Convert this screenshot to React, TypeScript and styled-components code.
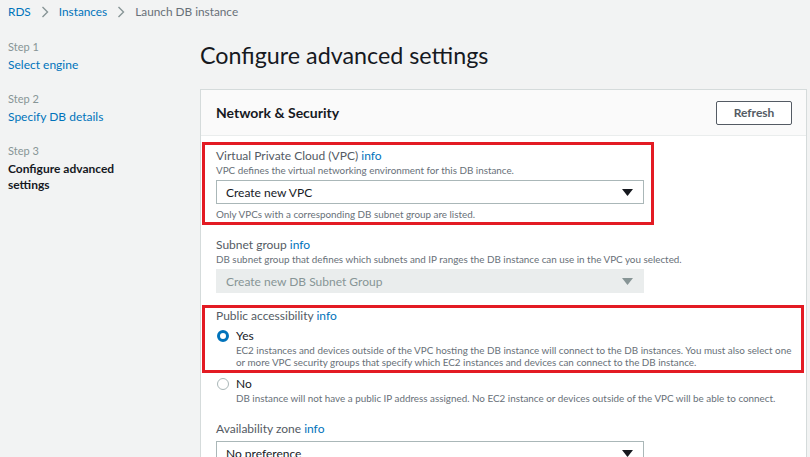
import React from "react";
import styled, { createGlobalStyle } from "styled-components";

const Global = createGlobalStyle`
  html, body { margin: 0; padding: 0; background: #f2f3f3; }
  body { font-family: Lato, "Noto Sans", sans-serif; color: #16191f; }
  * { box-sizing: border-box; }
`;

const Page = styled.div`
  width: 810px;
  height: 457px;
  overflow: hidden;
  background: #f2f3f3;
`;

const Crumbs = styled.nav`
  display: flex;
  align-items: center;
  gap: 10px;
  height: 23px;
  padding-left: 8px;
  font-size: 11.8px;
`;

const Crumb = styled.span<{ $current?: boolean }>`
  color: ${(p) => (p.$current ? "#687078" : "#0073bb")};
`;

const Sep = styled.span`
  display: flex;
`;

const Layout = styled.div`
  display: grid;
  grid-template-columns: 200px 1fr;
`;

const Steps = styled.div`
  display: flex;
  flex-direction: column;
  gap: 19px;
  padding: 16.5px 0 0 8px;
`;

const Step = styled.div`
  display: flex;
  flex-direction: column;
  gap: 3px;
`;

const StepNum = styled.div`
  font-size: 11px;
  color: #879596;
  line-height: 14px;
`;

const StepName = styled.div<{ $active?: boolean }>`
  font-size: 12px;
  line-height: 16px;
  color: ${(p) => (p.$active ? "#16191f" : "#0073bb")};
  font-weight: ${(p) => (p.$active ? 700 : 400)};
  width: 120px;
`;

const Main = styled.div`
  display: flex;
  flex-direction: column;
`;

const Title = styled.h1`
  margin: 0;
  height: 66px;
  display: flex;
  align-items: center;
  font-size: 23.3px;
  font-weight: 400;
  color: #16191f;
  padding-bottom: 2px;
`;

const Panel = styled.section`
  width: 607px;
  border: 1px solid #d5dbdb;
  background: #fff;
`;

const PanelHead = styled.header`
  display: flex;
  align-items: center;
  justify-content: space-between;
  height: 46px;
  padding: 0 14px 0 15px;
  background: #fafafa;
  border-bottom: 1px solid #eaeded;
`;

const PanelTitle = styled.h2`
  margin: 0;
  font-size: 14px;
  font-weight: 700;
  color: #16191f;
`;

const Button = styled.button`
  width: 76px;
  height: 24px;
  border: 1px solid #545b64;
  border-radius: 2px;
  background: #fff;
  font-family: inherit;
  font-size: 12px;
  font-weight: 700;
  color: #545b64;
  padding: 0;
`;

const Body = styled.div`
  display: flex;
  flex-direction: column;
  padding: 6px 0 0 15px;
`;

const Highlight = styled.div<{ $w: number; $top?: number; $padTop?: number }>`
  width: ${(p) => p.$w}px;
  margin: ${(p) => p.$top ?? 0}px 0 0 -14px;
  border: 3px solid #e31b23;
  padding: ${(p) => p.$padTop ?? 3}px 0 2px 11px;
`;

const Field = styled.div<{ $top?: number }>`
  display: flex;
  flex-direction: column;
  margin-top: ${(p) => p.$top ?? 0}px;
`;

const Label = styled.div<{ $strong?: boolean }>`
  font-size: 12px;
  line-height: 16px;
  color: ${(p) => (p.$strong ? "#16191f" : "#545b64")};
`;

const Info = styled.span`
  color: #0073bb;
`;

const Desc = styled.div`
  font-size: 9.85px;
  line-height: 12px;
  color: #687078;
`;

const Select = styled.div<{ $disabled?: boolean }>`
  width: 428px;
  height: 24px;
  margin: 4px 0;
  display: flex;
  align-items: center;
  justify-content: space-between;
  padding: 0 10px 0 9px;
  font-size: 12px;
  border: 1px solid ${(p) => (p.$disabled ? "#eaeded" : "#aab7b8")};
  background: ${(p) => (p.$disabled ? "#eaeded" : "#fff")};
  color: ${(p) => (p.$disabled ? "#879596" : "#16191f")};
`;

const Caret = ({ color }: { color: string }) => (
  <svg width="11" height="7" viewBox="0 0 11 7">
    <path d="M0 0h11L5.5 7z" fill={color} />
  </svg>
);

const Chevron = () => (
  <svg width="8" height="12" viewBox="0 0 8 12">
    <path d="M1.5 1l5 5-5 5" stroke="#879596" strokeWidth="1.4" fill="none" />
  </svg>
);

const RadioRow = styled.div<{ $top: number }>`
  display: grid;
  grid-template-columns: 20px 1fr;
  margin-top: ${(p) => p.$top}px;
`;

const Radio = styled.span<{ $on?: boolean }>`
  width: 12px;
  height: 12px;
  margin: 2px 0 0 1px;
  border-radius: 50%;
  border: ${(p) => (p.$on ? "3.5px solid #0073bb" : "1px solid #aab7b8")};
  background: #fff;
`;

const RadioText = styled.div`
  display: flex;
  flex-direction: column;
  width: 563px;
`;

export default function App() {
  return (
    <Page>
      <Global />
      <Crumbs>
        <Crumb>RDS</Crumb>
        <Sep><Chevron /></Sep>
        <Crumb>Instances</Crumb>
        <Sep><Chevron /></Sep>
        <Crumb $current>Launch DB instance</Crumb>
      </Crumbs>
      <Layout>
        <Steps>
          <Step>
            <StepNum>Step 1</StepNum>
            <StepName>Select engine</StepName>
          </Step>
          <Step>
            <StepNum>Step 2</StepNum>
            <StepName>Specify DB details</StepName>
          </Step>
          <Step>
            <StepNum>Step 3</StepNum>
            <StepName $active>Configure advanced settings</StepName>
          </Step>
        </Steps>
        <Main>
          <Title>Configure advanced settings</Title>
          <Panel>
            <PanelHead>
              <PanelTitle>Network &amp; Security</PanelTitle>
              <Button>Refresh</Button>
            </PanelHead>
            <Body>
              <Highlight $w={452}>
                <Field>
                  <Label>Virtual Private Cloud (VPC) <Info>info</Info></Label>
                  <Desc>VPC defines the virtual networking environment for this DB instance.</Desc>
                  <Select>
                    Create new VPC
                    <Caret color="#16191f" />
                  </Select>
                  <Desc>Only VPCs with a corresponding DB subnet group are listed.</Desc>
                </Field>
              </Highlight>
              <Field $top={12}>
                <Label>Subnet group <Info>info</Info></Label>
                <Desc>DB subnet group that defines which subnets and IP ranges the DB instance can use in the VPC you selected.</Desc>
                <Select $disabled>
                  Create new DB Subnet Group
                  <Caret color="#879596" />
                </Select>
              </Field>
              <Highlight $w={602} $top={8} $padTop={0}>
                <Label>Public accessibility <Info>info</Info></Label>
                <RadioRow $top={4}>
                  <Radio $on />
                  <RadioText>
                    <Label $strong>Yes</Label>
                    <Desc>EC2 instances and devices outside of the VPC hosting the DB instance will connect to the DB instances. You must also select one or more VPC security groups that specify which EC2 instances and devices can connect to the DB instance.</Desc>
                  </RadioText>
                </RadioRow>
              </Highlight>
              <RadioRow $top={3}>
                <Radio />
                <RadioText>
                  <Label $strong>No</Label>
                  <Desc>DB instance will not have a public IP address assigned. No EC2 instance or devices outside of the VPC will be able to connect.</Desc>
                </RadioText>
              </RadioRow>
              <Field $top={17}>
                <Label>Availability zone <Info>info</Info></Label>
                <Select>
                  No preference
                  <Caret color="#16191f" />
                </Select>
              </Field>
            </Body>
          </Panel>
        </Main>
      </Layout>
    </Page>
  );
}
